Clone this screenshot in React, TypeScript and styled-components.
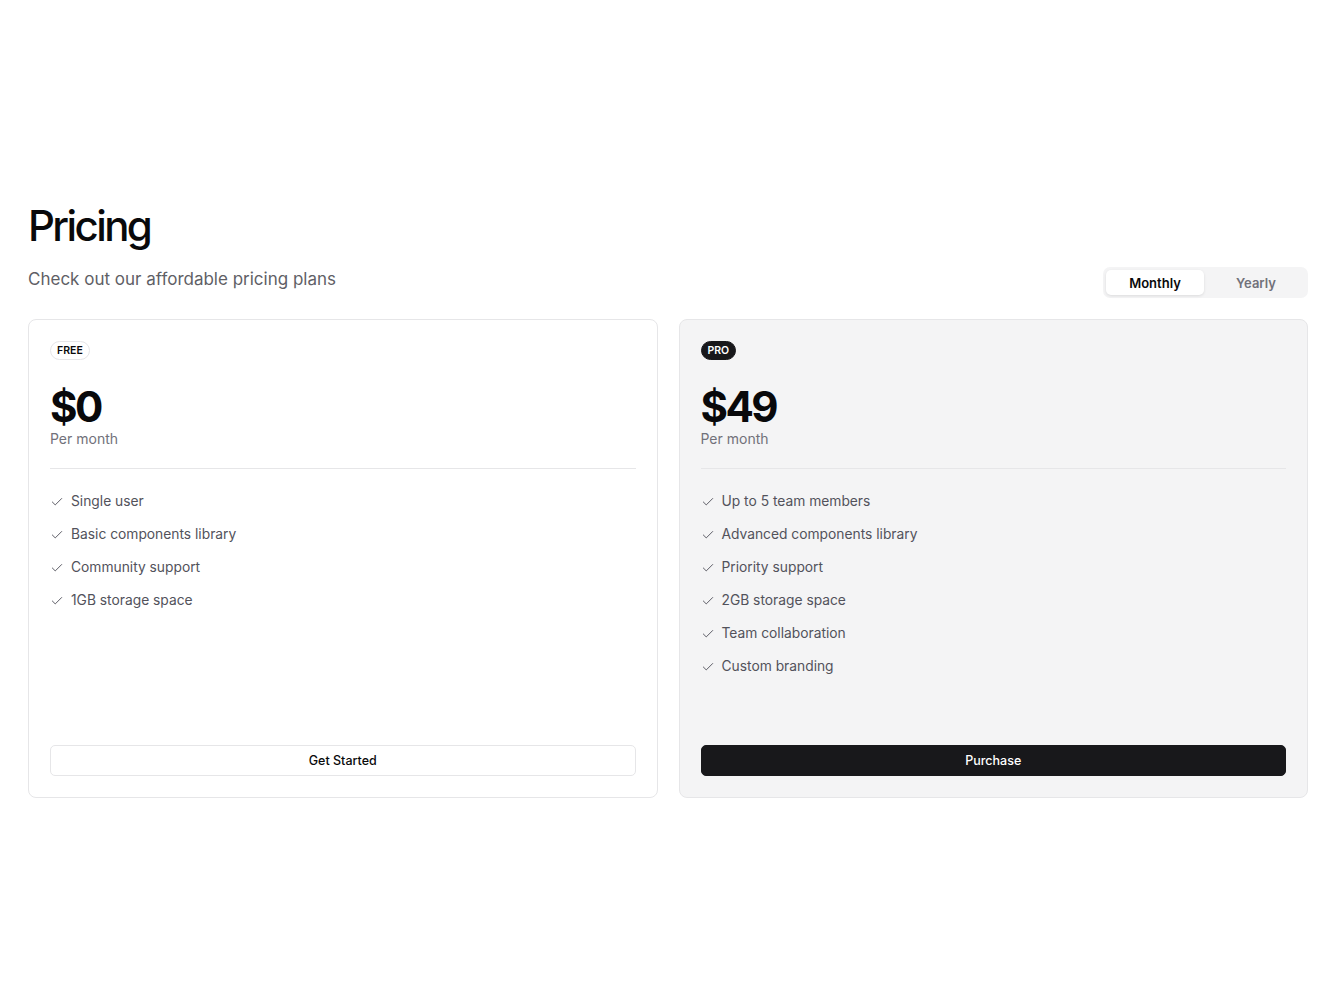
import React, { useState } from 'react'
import styled, { createGlobalStyle } from 'styled-components'
import { Check } from 'lucide-react'

const GlobalStyle = createGlobalStyle`
  body {
    margin: 0;
    background: #ffffff;
    font-family: Inter, "Noto Sans", sans-serif;
    color: #09090b;
  }
`

const Page = styled.div`
  padding: 198px 28px 0 28px;
`

const Title = styled.h1`
  margin: 0;
  font-size: 42px;
  line-height: 56px;
  font-weight: 500;
  letter-spacing: -2.6px;
`

const HeaderRow = styled.div`
  display: flex;
  align-items: flex-end;
  justify-content: space-between;
  margin-top: 13px;
`

const Subtitle = styled.p`
  margin: 0 0 7px 0;
  font-size: 17px;
  line-height: 24px;
  color: #5f5f66;
`

const Toggle = styled.div`
  display: flex;
  gap: 3px;
  padding: 3px;
  background: #f4f4f5;
  border-radius: 7px;
`

const ToggleButton = styled.button<{ $active: boolean }>`
  width: 98px;
  height: 25px;
  border: none;
  border-radius: 5px;
  font-family: Inter, sans-serif;
  font-size: 13px;
  font-weight: 600;
  cursor: pointer;
  background: ${({ $active }) => ($active ? '#ffffff' : 'transparent')};
  color: ${({ $active }) => ($active ? '#09090b' : '#71717a')};
  box-shadow: ${({ $active }) => ($active ? '0 1px 3px rgba(0,0,0,0.1)' : 'none')};
`

const Cards = styled.div`
  display: grid;
  grid-template-columns: 1fr 1fr;
  gap: 21px;
  margin-top: 21px;
`

const Card = styled.div<{ $pro?: boolean }>`
  display: flex;
  flex-direction: column;
  height: 479px;
  box-sizing: border-box;
  padding: 21px;
  border: 1px solid #e6e6e8;
  border-radius: 8px;
  background: ${({ $pro }) => ($pro ? '#f4f4f5' : '#ffffff')};
`

const Badge = styled.span<{ $pro?: boolean }>`
  align-self: flex-start;
  font-size: 10.5px;
  line-height: 13px;
  font-weight: 600;
  padding: 2px 6px;
  border-radius: 999px;
  border: 1px solid ${({ $pro }) => ($pro ? '#18181b' : '#e6e6e8')};
  background: ${({ $pro }) => ($pro ? '#18181b' : '#ffffff')};
  color: ${({ $pro }) => ($pro ? '#ffffff' : '#09090b')};
`

const Price = styled.div`
  margin-top: 27px;
  font-size: 42px;
  line-height: 40px;
  font-weight: 700;
  letter-spacing: -2.6px;
`

const Period = styled.div`
  margin-top: 3px;
  font-size: 14px;
  line-height: 18px;
  color: #71717a;
`

const Divider = styled.hr`
  margin: 20px 0 22px 0;
  border: none;
  border-top: 1px solid #e6e6e8;
`

const Features = styled.ul`
  list-style: none;
  margin: 0;
  padding: 0;
  display: flex;
  flex-direction: column;
  gap: 12px;
`

const Feature = styled.li`
  display: flex;
  align-items: center;
  gap: 7px;
  font-size: 13.8px;
  line-height: 21px;
  color: #52525b;

  svg {
    color: #52525b;
    flex-shrink: 0;
  }
`

const ActionButton = styled.button<{ $primary?: boolean }>`
  margin-top: auto;
  height: 31px;
  border-radius: 5px;
  font-family: Inter, sans-serif;
  font-size: 12.5px;
  font-weight: 500;
  cursor: pointer;
  border: 1px solid ${({ $primary }) => ($primary ? '#18181b' : '#e6e6e8')};
  background: ${({ $primary }) => ($primary ? '#18181b' : '#ffffff')};
  color: ${({ $primary }) => ($primary ? '#ffffff' : '#09090b')};
`

const plans = [
  {
    badge: 'FREE',
    price: '$0',
    pro: false,
    action: 'Get Started',
    features: ['Single user', 'Basic components library', 'Community support', '1GB storage space'],
  },
  {
    badge: 'PRO',
    price: '$49',
    pro: true,
    action: 'Purchase',
    features: [
      'Up to 5 team members',
      'Advanced components library',
      'Priority support',
      '2GB storage space',
      'Team collaboration',
      'Custom branding',
    ],
  },
]

const App: React.FC = () => {
  const [period, setPeriod] = useState<'monthly' | 'yearly'>('monthly')

  return (
    <>
      <GlobalStyle />
      <Page>
        <Title>Pricing</Title>
        <HeaderRow>
          <Subtitle>Check out our affordable pricing plans</Subtitle>
          <Toggle>
            <ToggleButton $active={period === 'monthly'} onClick={() => setPeriod('monthly')}>
              Monthly
            </ToggleButton>
            <ToggleButton $active={period === 'yearly'} onClick={() => setPeriod('yearly')}>
              Yearly
            </ToggleButton>
          </Toggle>
        </HeaderRow>
        <Cards>
          {plans.map((plan) => (
            <Card key={plan.badge} $pro={plan.pro}>
              <Badge $pro={plan.pro}>{plan.badge}</Badge>
              <Price>{plan.price}</Price>
              <Period>Per month</Period>
              <Divider />
              <Features>
                {plan.features.map((f) => (
                  <Feature key={f}>
                    <Check size={14} strokeWidth={1.6} />
                    {f}
                  </Feature>
                ))}
              </Features>
              <ActionButton $primary={plan.pro}>{plan.action}</ActionButton>
            </Card>
          ))}
        </Cards>
      </Page>
    </>
  )
}

export default App
